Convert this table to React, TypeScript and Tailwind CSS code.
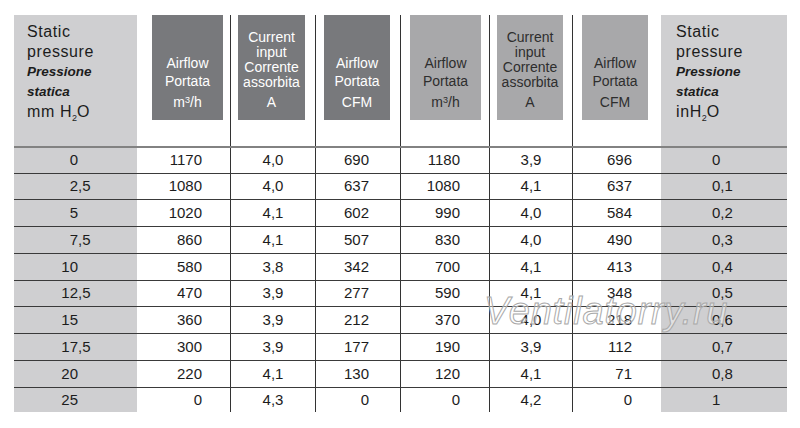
import React from "react";

const cols = "grid grid-cols-[123px_93px_85px_85px_89px_83px_89px_126px]";

const rows: string[][] = [
  ["0", "1170", "4,0", "690", "1180", "3,9", "696", "0"],
  ["2,5", "1080", "4,0", "637", "1080", "4,1", "637", "0,1"],
  ["5", "1020", "4,1", "602", "990", "4,0", "584", "0,2"],
  ["7,5", "860", "4,1", "507", "830", "4,0", "490", "0,3"],
  ["10", "580", "3,8", "342", "700", "4,1", "413", "0,4"],
  ["12,5", "470", "3,9", "277", "590", "4,1", "348", "0,5"],
  ["15", "360", "3,9", "212", "370", "4,0", "218", "0,6"],
  ["17,5", "300", "3,9", "177", "190", "3,9", "112", "0,7"],
  ["20", "220", "4,1", "130", "120", "4,1", "71", "0,8"],
  ["25", "0", "4,3", "0", "0", "4,2", "0", "1"],
];

function PressureHead({ unit }: { unit: "mm" | "in" }) {
  return (
    <div className="bg-[#cfcfd1] text-[#1c1c1c] leading-[20px] pt-[7px]">
      <div className="text-[16px] tracking-[0.6px]">Static</div>
      <div className="text-[16px] tracking-[0.6px]">pressure</div>
      <div className="text-[13.5px] font-bold italic">Pressione</div>
      <div className="text-[13.5px] font-bold italic">statica</div>
      <div className="text-[16px] tracking-[0.6px]">
        {unit === "mm" ? "mm H" : "inH"}
        <sub className="text-[9px] tracking-normal -bottom-[0.45em]">2</sub>O
      </div>
    </div>
  );
}

function HeadBox({
  dark,
  current,
  unit,
  className,
}: {
  dark: boolean;
  current?: boolean;
  unit: React.ReactNode;
  className: string;
}) {
  return (
    <div
      className={
        "h-[105px] flex flex-col justify-end items-center text-center text-[14px] pb-[10px] " +
        (dark ? "bg-[#78797c] text-white " : "bg-[#a8a8aa] text-[#2e2e2e] ") +
        className
      }
    >
      {current ? (
        <div className="leading-[15px]">
          <div>Current</div>
          <div>input</div>
          <div>Corrente</div>
          <div>assorbita</div>
        </div>
      ) : (
        <div className="leading-[18px]">
          <div>Airflow</div>
          <div>Portata</div>
        </div>
      )}
      <div className="leading-[15px] mt-[5px]">{unit}</div>
    </div>
  );
}

const m3h = (
  <>
    m<sup className="text-[9px]">3</sup>/h
  </>
);

export default function App() {
  return (
    <div
      className="w-[800px] h-[428px] bg-white relative pl-[14px] pt-[15px]"
      style={{ fontFamily: '"Liberation Sans", Arial, sans-serif' }}
    >
      <div className="w-[773px]">
        {/* header */}
        <div className={cols + " h-[133px] border-b-2 border-[#828282]"}>
          <div className="pl-[13px] bg-[#cfcfd1]">
            <PressureHead unit="mm" />
          </div>
          <div className="pl-[15px]">
            <HeadBox dark unit={m3h} className="w-[71px]" />
          </div>
          <div className="border-l border-[#333] pl-[7px]">
            <HeadBox dark current unit="A" className="w-[67px]" />
          </div>
          <div className="border-l border-[#333] pl-[8px]">
            <HeadBox dark unit="CFM" className="w-[66px]" />
          </div>
          <div className="border-l border-[#333] pl-[9px]">
            <HeadBox dark={false} unit={m3h} className="w-[71px]" />
          </div>
          <div className="border-l border-[#333] pl-[7px]">
            <HeadBox dark={false} current unit="A" className="w-[66px]" />
          </div>
          <div className="border-l border-[#333] pl-[9px]">
            <HeadBox dark={false} unit="CFM" className="w-[66px]" />
          </div>
          <div className="pl-[15px] bg-[#cfcfd1]">
            <PressureHead unit="in" />
          </div>
        </div>

        {/* body */}
        {rows.map((r, i) => {
          const last = i === rows.length - 1;
          const h = i === 0 ? "h-[25.5px]" : last ? "h-[24.5px]" : "h-[26.8px]";
          const [intPart, frac] = r[0].split(",");
          return (
            <div
              key={i}
              className={
                cols +
                " text-[15px] text-[#1c1c1c] " +
                h +
                (last ? "" : " border-b border-[#3a3a3a]")
              }
            >
              <div className="bg-[#cfcfd1] flex items-center">
                <span className="w-[64px] text-right">{intPart}</span>
                {frac !== undefined && <span>,{frac}</span>}
              </div>
              <div className="flex items-center justify-end pr-[28px]">{r[1]}</div>
              <div className="border-l border-[#333] flex items-center justify-center">{r[2]}</div>
              <div className="border-l border-[#333] flex items-center justify-end pr-[31px]">{r[3]}</div>
              <div className="border-l border-[#333] flex items-center justify-end pr-[29px]">{r[4]}</div>
              <div className="border-l border-[#333] flex items-center justify-center">{r[5]}</div>
              <div className="border-l border-[#333] flex items-center justify-end pr-[29px]">{r[6]}</div>
              <div className="bg-[#cfcfd1] flex items-center pl-[51px]">{r[7]}</div>
            </div>
          );
        })}
      </div>

      {/* watermark */}
      <div className="absolute left-[484px] top-[292px] text-[38px] leading-[38px] italic tracking-[0.8px] text-white/40 [-webkit-text-stroke:1px_#a9a9a9] pointer-events-none">
        Ventilatorry.ru
      </div>
    </div>
  );
}
